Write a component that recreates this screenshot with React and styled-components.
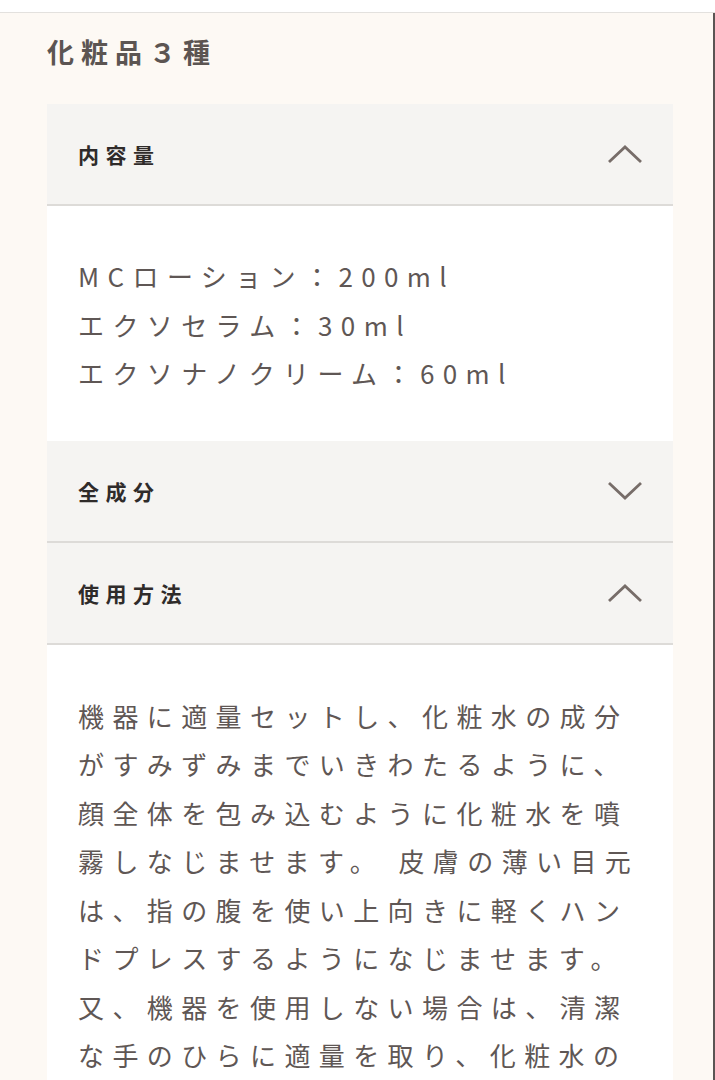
import React, { useState } from 'react'
import styled, { createGlobalStyle } from 'styled-components'

const GlobalStyle = createGlobalStyle`
  body {
    margin: 0;
    background: #ffffff;
    font-family: "Noto Sans CJK JP", "Noto Sans", sans-serif;
  }
`

const TopStrip = styled.div`
  height: 12px;
  background: #ffffff;
  border-bottom: 1px solid #e3e1de;
`

const Section = styled.section`
  background: #fdf9f4;
  border-right: 2px solid #5a5553;
  padding: 16px 40px 0 47px;
  min-height: 1067px;
  box-sizing: border-box;
`

const Title = styled.h2`
  margin: 0 0 30px;
  font-size: 27px;
  font-weight: 700;
  line-height: 45px;
  letter-spacing: 7px;
  color: #5c5552;
`

const Accordion = styled.div`
  display: flex;
  flex-direction: column;
`

const Header = styled.button`
  display: flex;
  align-items: center;
  justify-content: space-between;
  width: 100%;
  height: 102px;
  padding: 0 30px 0 31px;
  box-sizing: border-box;
  background: #f5f4f2;
  border: none;
  border-bottom: 2px solid #dddbd8;
  cursor: pointer;
  font-family: inherit;
  font-size: 21px;
  font-weight: 700;
  letter-spacing: 6.5px;
  color: #2f2b2a;
`

const Chevron = styled.svg`
  width: 36px;
  height: 20px;
  transform: ${({ $open }) => ($open ? 'none' : 'rotate(180deg)')};
`

const Body = styled.div`
  background: #ffffff;
  padding: ${({ $pad }) => $pad};
  font-size: 26px;
  line-height: 48.5px;
  letter-spacing: 8.4px;
  color: #5f5755;
`

const Line = styled.div``

const items = [
  {
    title: '内容量',
    open: true,
    pad: '46px 20px 43px 31px',
    lines: ['MCローション：200ml', 'エクソセラム：30ml', 'エクソナノクリーム：60ml'],
  },
  { title: '全成分', open: false },
  {
    title: '使用方法',
    open: true,
    pad: '47px 20px 40px 31px',
    lines: [
      '機器に適量セットし、化粧水の成分',
      'がすみずみまでいきわたるように、',
      '顔全体を包み込むように化粧水を噴',
      '霧しなじませます。 皮膚の薄い目元',
      'は、指の腹を使い上向きに軽くハン',
      'ドプレスするようになじませます。',
      '又、機器を使用しない場合は、清潔',
      'な手のひらに適量を取り、化粧水の',
    ],
  },
]

function Item({ item }) {
  const [open, setOpen] = useState(item.open)
  return (
    <>
      <Header onClick={() => setOpen(!open)}>
        <span>{item.title}</span>
        <Chevron $open={open} viewBox="0 0 36 20" fill="none">
          <path d="M2 18 L18 3 L34 18" stroke="#776d69" strokeWidth="2.8" />
        </Chevron>
      </Header>
      {open && item.lines && (
        <Body $pad={item.pad}>
          {item.lines.map((l) => (
            <Line key={l}>{l}</Line>
          ))}
        </Body>
      )}
    </>
  )
}

export default function App() {
  return (
    <>
      <GlobalStyle />
      <TopStrip />
      <Section>
        <Title>化粧品３種</Title>
        <Accordion>
          {items.map((it) => (
            <Item key={it.title} item={it} />
          ))}
        </Accordion>
      </Section>
    </>
  )
}
